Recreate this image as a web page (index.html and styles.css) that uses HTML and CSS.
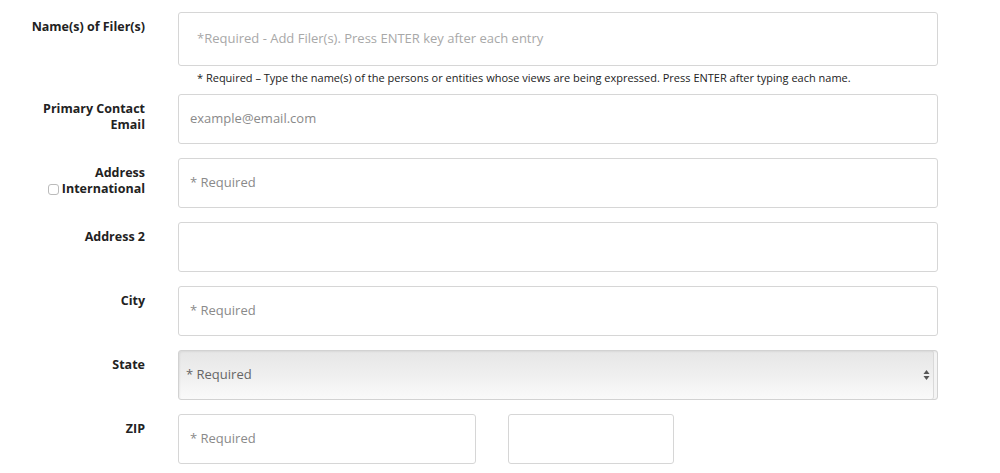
FILE: index.html
```html
<!DOCTYPE html>
<html lang="en">
<head>
<meta charset="utf-8">
<title>Filer form</title>
<link rel="stylesheet" href="styles.css">
</head>
<body>
<form class="form">
  <div class="row row-help">
    <div class="label">Name(s) of Filer(s)</div>
    <div class="control">
      <div class="field field-tall"><span class="ph ph-light">*Required - Add Filer(s). Press ENTER key after each entry</span></div>
      <div class="help">* Required – Type the name(s) of the persons or entities whose views are being expressed. Press ENTER after typing each name.</div>
    </div>
  </div>
  <div class="row">
    <div class="label">Primary Contact<br>Email</div>
    <div class="control"><div class="field"><span class="ph">example@email.com</span></div></div>
  </div>
  <div class="row">
    <div class="label">Address<br><span class="check-line"><span class="checkbox"></span>International</span></div>
    <div class="control"><div class="field"><span class="ph">* Required</span></div></div>
  </div>
  <div class="row">
    <div class="label">Address 2</div>
    <div class="control"><div class="field"></div></div>
  </div>
  <div class="row">
    <div class="label">City</div>
    <div class="control"><div class="field"><span class="ph">* Required</span></div></div>
  </div>
  <div class="row">
    <div class="label">State</div>
    <div class="control">
      <div class="field select">
        <span class="ph ph-select">* Required</span>
        <svg class="arrows" width="7" height="12" viewBox="0 0 7 12"><path d="M3.5 1 L6.5 5 L0.5 5 Z M3.5 11 L6.5 7 L0.5 7 Z" fill="#555"/></svg>
      </div>
    </div>
  </div>
  <div class="row">
    <div class="label">ZIP</div>
    <div class="control zip">
      <div class="field field-zip"><span class="ph">* Required</span></div>
      <div class="field field-zip4"></div>
    </div>
  </div>
</form>
</body>
</html>
```
FILE: styles.css
```css
html, body {
  margin: 0;
  padding: 0;
  background: #fff;
}
body {
  font-family: "Open Sans", "Liberation Sans", sans-serif;
  color: #222;
}
.form {
  padding-top: 12px;
  display: flex;
  flex-direction: column;
  gap: 14px;
}
.row {
  display: grid;
  grid-template-columns: 145px 760px;
  column-gap: 33px;
}
.row-help {
  margin-bottom: -6px;
}
.label {
  text-align: right;
  font-weight: 700;
  font-size: 12.5px;
  line-height: 16px;
  padding-top: 7px;
  color: #222;
}
.check-line {
  display: inline-flex;
  align-items: center;
  gap: 3px;
}
.checkbox {
  width: 11px;
  height: 11px;
  border: 1px solid #bbb;
  border-radius: 3px;
  background: #fff;
  box-sizing: border-box;
}
.control {
  display: flex;
  flex-direction: column;
}
.field {
  box-sizing: border-box;
  height: 50px;
  border: 1px solid #d6d6d6;
  border-radius: 3px;
  background: #fff;
  display: flex;
  align-items: center;
  padding-left: 11px;
  position: relative;
}
.field-tall {
  height: 54px;
  padding-left: 18px;
}
.ph {
  font-size: 13px;
  line-height: 16px;
  color: #8a8a8a;
  margin-top: -2px;
}
.ph-light {
  color: #a8a8a8;
}
.help {
  font-size: 11px;
  line-height: 16px;
  margin: 4px 0 0 19px;
  color: #222;
}
.select {
  background: linear-gradient(to bottom, #e6e6e6 0%, #efefef 50%, #fafafa 100%);
  border-color: #d2d2d2;
  padding-left: 7px;
  box-shadow: inset 1px 1px 2px rgba(0,0,0,0.06), inset -3px 0 0 #f4f4f4, inset -4px 0 0 #d9d9d9;
}
.ph-select {
  color: #666;
}
.arrows {
  position: absolute;
  right: 7px;
  top: 18px;
}
.zip {
  flex-direction: row;
  gap: 32px;
}
.field-zip {
  width: 298px;
}
.field-zip4 {
  width: 166px;
}
```
